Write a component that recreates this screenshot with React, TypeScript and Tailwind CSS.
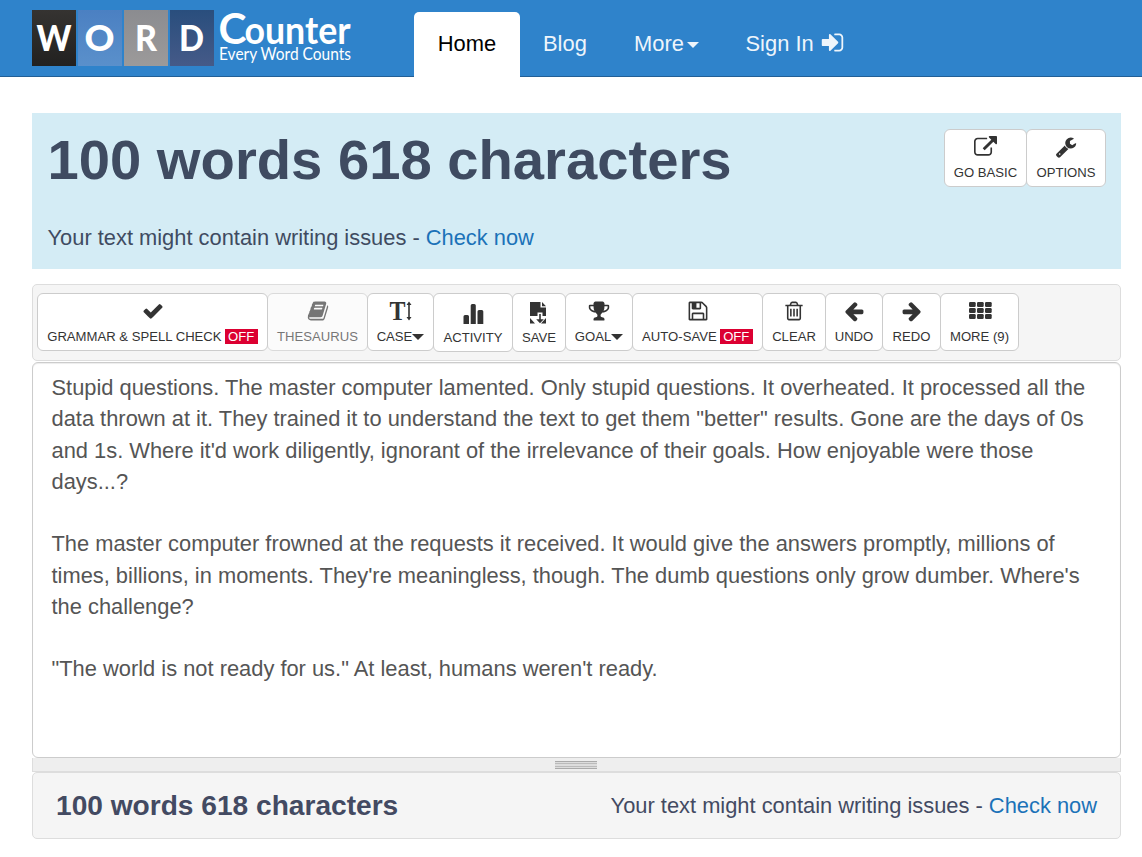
import type { ReactNode } from "react";
import clsx from "clsx";

// Font Awesome 4 shapes, drawn on their 1792 grid
const paths = {
  signIn:
    "M1312 896q0 26-19 45l-544 544q-19 19-45 19t-45-19-19-45v-288h-448q-26 0-45-19t-19-45v-384q0-26 19-45t45-19h448v-288q0-26 19-45t45-19 45 19l544 544q19 19 19 45zm352-352v704q0 119-84.5 203.5t-203.5 84.5h-320q-13 0-22.5-9.5t-9.5-22.5q0-4-1-20t-.5-26.5 3-23.5 10-19.5 20.5-6.5h320q66 0 113-47t47-113v-704q0-66-47-113t-113-47h-312l-11.5-1-11.5-3-8-5.5-7-9-2-13.5q0-4-1-20t-.5-26.5 3-23.5 10-19.5 20.5-6.5h320q119 0 203.5 84.5t84.5 203.5z",
  externalLink:
    "M1408 928v320q0 119-84.5 203.5t-203.5 84.5h-832q-119 0-203.5-84.5t-84.5-203.5v-832q0-119 84.5-203.5t203.5-84.5h704q14 0 23 9t9 23v64q0 14-9 23t-23 9h-704q-66 0-113 47t-47 113v832q0 66 47 113t113 47h832q66 0 113-47t47-113v-320q0-14 9-23t23-9h64q14 0 23 9t9 23zm384-864v512q0 26-19 45t-45 19-45-19l-176-176-652 652q-10 10-23 10t-23-10l-114-114q-10-10-10-23t10-23l652-652-176-176q-19-19-19-45t19-45 45-19h512q26 0 45 19t19 45z",
  wrench:
    "M448 1472q0-26-19-45t-45-19-45 19-19 45 19 45 45 19 45-19 19-45zm644-420l-682 682q-37 37-90 37-52 0-91-37l-106-108q-38-36-38-90 0-53 38-91l681-681q39 98 114.5 173.5t173.5 114.5zm634-435q0 39-23 106-47 134-164.5 217.5t-258.5 83.5q-185 0-316.5-131.5t-131.5-316.5 131.5-316.5 316.5-131.5q58 0 121.5 16.5t107.5 46.5q16 11 16 28t-16 28l-293 169v224l193 107q5-3 79-48.5t135.5-81 70.5-35.5q15 0 23.5 10t8.5 25z",
  check:
    "M1671 566q0 40-28 68l-724 724-136 136q-28 28-68 28t-68-28l-136-136-362-362q-28-28-28-68t28-68l136-136q28-28 68-28t68 28l294 295 656-657q28-28 68-28t68 28l136 136q28 28 28 68z",
  book:
    "M1703 478q40 57 18 129l-275 906q-19 64-76.5 107.5t-122.5 43.5h-923q-77 0-148.5-53.5t-99.5-131.5q-24-67-2-127 0-4 3-27t4-37q1-8-3-21.5t-3-19.5q2-11 8-21t16.5-23.5 16.5-23.5q23-38 45-91.5t30-91.5q3-10 .5-30t-.5-28q3-11 17-28t17-23q21-36 42-92t25-90q1-9-2.5-32t.5-28q4-13 22-30.5t22-22.5q19-26 42.5-84.5t27.5-96.5q1-8-3-25.5t-2-26.5q2-8 9-18t18-23 17-21q8-12 16.5-30.5t15-35 16-36 19.5-32 26.5-23.5 36-11.5 47.5 5.5l-1 3q38-9 51-9h761q74 0 114 56t18 130l-274 906q-36 119-71.5 153.5t-128.5 34.5h-869q-27 0-38 15-11 16-1 43 24 70 144 70h923q29 0 56-15.5t35-41.5l300-987q7-22 5-57 38 15 59 43zm-1064 2q-4 13 2 22.5t20 9.5h608q13 0 25.5-9.5t16.5-22.5l21-64q4-13-2-22.5t-20-9.5h-608q-13 0-25.5 9.5t-16.5 22.5zm-83 256q-4 13 2 22.5t20 9.5h608q13 0 25.5-9.5t16.5-22.5l21-64q4-13-2-22.5t-20-9.5h-608q-13 0-25.5 9.5t-16.5 22.5z",
  trophy:
    "M522 883q-74-162-74-371h-256v96q0 78 94.5 162t235.5 113zm1078-275v-96h-256q0 209-74 371 141-29 235.5-113t94.5-162zm128-128v128q0 71-41.5 143t-112 130-173 97.5-215.5 44.5q-42 54-95 95-38 34-52.5 72.5t-14.5 89.5q0 54 30.5 91t97.5 37q75 0 133.5 45.5t58.5 114.5v64q0 14-9 23t-23 9h-832q-14 0-23-9t-9-23v-64q0-69 58.5-114.5t133.5-45.5q67 0 97.5-37t30.5-91q0-51-14.5-89.5t-52.5-72.5q-53-41-95-95-113-5-215.5-44.5t-173-97.5-112-130-41.5-143v-128q0-40 28-68t68-28h288v-96q0-66 47-113t113-47h576q66 0 113 47t47 113v96h288q40 0 68 28t28 68z",
  floppy:
    "M512 1536h768v-384h-768v384zm896 0h128v-896q0-14-10-38.5t-20-34.5l-281-281q-10-10-34-20t-39-10v416q0 40-28 68t-68 28h-576q-40 0-68-28t-28-68v-416h-128v1280h128v-416q0-40 28-68t68-28h832q40 0 68 28t28 68v416zm-384-928v-320q0-13-9.5-22.5t-22.5-9.5h-192q-13 0-22.5 9.5t-9.5 22.5v320q0 13 9.5 22.5t22.5 9.5h192q13 0 22.5-9.5t9.5-22.5zm640 32v928q0 40-28 68t-68 28h-1344q-40 0-68-28t-28-68v-1344q0-40 28-68t68-28h928q40 0 88 20t76 48l280 280q28 28 48 76t20 88z",
  trash:
    "M704 736v576q0 14-9 23t-23 9h-64q-14 0-23-9t-9-23v-576q0-14 9-23t23-9h64q14 0 23 9t9 23zm256 0v576q0 14-9 23t-23 9h-64q-14 0-23-9t-9-23v-576q0-14 9-23t23-9h64q14 0 23 9t9 23zm256 0v576q0 14-9 23t-23 9h-64q-14 0-23-9t-9-23v-576q0-14 9-23t23-9h64q14 0 23 9t9 23zm128 724v-948h-896v948q0 22 7 40.5t14.5 27 10.5 8.5h832q3 0 10.5-8.5t14.5-27 7-40.5zm-672-1076h448l-48-117q-7-9-17-11h-317q-10 2-17 11zm928 32v64q0 14-9 23t-23 9h-96v948q0 83-47 143.5t-113 60.5h-832q-66 0-113-58.5t-47-141.5v-952h-96q-14 0-23-9t-9-23v-64q0-14 9-23t23-9h309l70-167q15-37 54-63t79-26h320q40 0 79 26t54 63l70 167h309q14 0 23 9t9 23z",
  arrowLeft:
    "M1664 896v128q0 53-32.5 90.5t-84.5 37.5h-704l293 294q38 36 38 90t-38 90l-75 76q-37 37-90 37-52 0-91-37l-651-652q-37-37-37-90 0-52 37-91l651-650q38-38 91-38 52 0 90 38l75 74q38 38 38 91t-38 91l-293 293h704q52 0 84.5 37.5t32.5 90.5z",
  arrowRight:
    "M1600 960q0 54-37 91l-651 651q-39 37-91 37-51 0-90-37l-75-75q-38-38-38-91t38-91l293-293h-704q-52 0-84.5-37.5t-32.5-90.5v-128q0-53 32.5-90.5t84.5-37.5h704l-293-294q-38-36-38-90t38-90l75-75q38-38 90-38 53 0 91 38l651 651q37 35 37 90z",
};

function Icon({ name, className = "size-[22px]" }: { name: keyof typeof paths; className?: string }) {
  return (
    <svg viewBox="0 0 1792 1792" fill="currentColor" className={className}>
      <path d={paths[name]} />
    </svg>
  );
}

function TextHeightIcon() {
  return (
    <svg viewBox="0 0 24 22" fill="currentColor" className="h-[22px] w-6 overflow-visible">
      <text
        x="0.500"
        y="20"
        fontSize="28"
        fontWeight="700"
        textLength="16"
        lengthAdjust="spacingAndGlyphs"
        fontFamily="Liberation Serif, serif"
      >
        T
      </text>
      <path d="M20 1.500l2.500 3.500h-1.700v12h1.700l-2.500 3.500-2.500-3.500h1.700V5h-1.700z" />
    </svg>
  );
}

function ChartIcon() {
  return (
    <svg viewBox="0 0 22 22" fill="currentColor" className="size-[22px] overflow-visible">
      <path d="M1.500 23v-7.500q0-1.500 1.500-1.500h2.500q1.500 0 1.500 1.500V23zM8.700 23V4.500Q8.700 3 10.200 3h2.100q1.500 0 1.500 1.500V23zM15.500 23V10.500Q15.500 9 17 9h2.800q1.500 0 1.500 1.500V23z" />
    </svg>
  );
}

function SaveFileIcon() {
  return (
    <svg viewBox="0 0 18 22" fill="currentColor" className="mt-0.5 h-[22px] w-[18px]">
      <path d="M0 0h10.500v5.500H16V14h-3.500v-3.500h-5V14H0zM12 0l4 4.200h-4zM0 16l5 5.500H0zM16 16v5.500h-5zM9.200 12h1.600v5.200h3L10 21.300l-3.800-4.100h3z" />
    </svg>
  );
}

function GridIcon() {
  return (
    <svg viewBox="0 0 24 22" fill="currentColor" className="h-[22px] w-6">
      {[2, 8, 14].map((y) =>
        [1, 9, 17].map((x) => <rect key={`${x}-${y}`} x={x} y={y} width="6.700" height="5" rx="1.200" />)
      )}
    </svg>
  );
}

function Caret({ className }: { className: string }) {
  return (
    <svg viewBox="0 0 12 6" fill="currentColor" preserveAspectRatio="none" className={className}>
      <path d="M0 0h12L6 6z" />
    </svg>
  );
}

function Off() {
  return <span className="ml-[3px] bg-[#dc0032] px-[3.500px] text-white">OFF</span>;
}

type ToolProps = { icon: ReactNode; children: ReactNode; className: string };

function Tool({ icon, children, className }: ToolProps) {
  return (
    <button
      className={clsx(
        "flex shrink-0 flex-col items-center rounded-[6px] border border-[#ccc] bg-white pt-[6px] text-[13.120px] leading-[15px] whitespace-nowrap text-[#333]",
        className
      )}
    >
      <span className="flex h-[22px] items-center">{icon}</span>
      <span className="mt-[7px] flex items-center">{children}</span>
    </button>
  );
}

function Logo() {
  const tiles = [
    { letter: "W", x: 0, width: 44, from: "#353331", to: "#222120", len: 35 },
    { letter: "O", x: 46, width: 44, from: "#4b80c2", to: "#5a90cb", len: 30 },
    { letter: "R", x: 92, width: 44, from: "#8b8c90", to: "#9c9a9a", len: 22 },
    { letter: "D", x: 138, width: 44, from: "#294e7d", to: "#455a88", len: 25 },
  ];

  return (
    <svg viewBox="0 0 322 60" className="h-[60px] w-[322px] overflow-visible" fill="#fff" fontFamily="Lato, sans-serif">
      {tiles.map((t) => (
        <g key={t.letter}>
          <linearGradient id={`tile-${t.letter}`} x1="0" y1="0" x2="0" y2="1">
            <stop stopColor={t.from} />
            <stop offset="1" stopColor={t.to} />
          </linearGradient>
          <rect x={t.x} width={t.width} height="56" fill={`url(#tile-${t.letter})`} />
          <text
            x={t.x + (t.letter === "W" || t.letter === "R" ? 22 : 21.500)}
            y="41"
            fontSize="36"
            fontWeight="900"
            textAnchor="middle"
            textLength={t.len}
            lengthAdjust="spacingAndGlyphs"
          >
            {t.letter}
          </text>
        </g>
      ))}
      <text x="186.500" y="34" fontSize="42" fontWeight="700" textLength="28" lengthAdjust="spacingAndGlyphs">
        C
      </text>
      <text x="212.500" y="34" fontSize="39" fontWeight="700" textLength="106" lengthAdjust="spacingAndGlyphs">
        ounter
      </text>
      <text x="187" y="50" fontSize="17.500" textLength="132" lengthAdjust="spacingAndGlyphs">
        Every Word Counts
      </text>
    </svg>
  );
}

function Header() {
  return (
    <header className="flex h-[77px] border-b border-[#225f96] bg-[#2f83cb] pl-8">
      <div className="w-[382px] pt-[10px]">
        <Logo />
      </div>
      <nav className="mt-3 flex h-[65px] text-[21.900px] leading-[64px] text-[#eef5fb]">
        <a className="h-[65px] w-[106px] rounded-t-[5px] bg-white text-center text-black">Home</a>
        <a className="w-[91px] pl-[23px]">Blog</a>
        <a className="flex h-[63px] w-[111px] items-center pl-[23px]">
          More
          <Caret className="mt-0.5 ml-[3px] h-[6px] w-[12px]" />
        </a>
        <a className="flex h-[63px] items-center pl-[23.500px]">
          Sign In
          <Icon name="signIn" className="mb-0.5 ml-1.5 size-[25px]" />
        </a>
      </nav>
    </header>
  );
}

const text = `Stupid questions. The master computer lamented. Only stupid questions. It overheated. It processed all the
data thrown at it. They trained it to understand the text to get them "better" results. Gone are the days of 0s
and 1s. Where it'd work diligently, ignorant of the irrelevance of their goals. How enjoyable were those
days...?

The master computer frowned at the requests it received. It would give the answers promptly, millions of
times, billions, in moments. They're meaningless, though. The dumb questions only grow dumber. Where's
the challenge?

"The world is not ready for us." At least, humans weren't ready.`;

export default function App() {
  return (
    <div className="h-[857px] w-[1142px] overflow-hidden bg-white font-['Liberation_Sans',Arial,sans-serif]">
      <Header />

      <main className="mt-9 ml-8 w-[1089px]">
        <section className="flex h-[156px] justify-between bg-[#d4ecf5] pr-[15px] pl-[15.500px] text-[#3f4b61]">
          <div>
            <h1 className="mt-[15px] text-[56.200px] leading-[64px] font-bold whitespace-nowrap">
              100 words 618 characters
            </h1>
            <p className="mt-[30px] text-[21.860px] leading-[31px]">
              Your text might contain writing issues - <a className="text-[#1b72b8]">Check now</a>
            </p>
          </div>
          <div className="mt-4 flex">
            <Tool className="h-[58px] w-[83px]" icon={<Icon name="externalLink" className="size-[23px]" />}>
              GO BASIC
            </Tool>
            <Tool className="-ml-px h-[58px] w-[80px]" icon={<Icon name="wrench" />}>
              OPTIONS
            </Tool>
          </div>
        </section>

        <div className="mt-[15px] flex h-[77px] items-start rounded-[5px] border border-[#ddd] bg-[#f5f5f5] pt-2 pl-1">
          <Tool className="h-[58px] w-[231px]" icon={<Icon name="check" />}>
            GRAMMAR &amp; SPELL CHECK
            <Off />
          </Tool>
          <Tool className="-ml-px h-[58px] w-[101px] opacity-65" icon={<Icon name="book" />}>
            THESAURUS
          </Tool>
          <Tool className="-ml-px h-[58px] w-[67px]" icon={<TextHeightIcon />}>
            CASE
            <Caret className="h-[6px] w-[12px]" />
          </Tool>
          <Tool className="-ml-px h-[59px] w-[80px] pt-[7px]" icon={<ChartIcon />}>
            ACTIVITY
          </Tool>
          <Tool className="-ml-px h-[59px] w-[54px] pt-[7px]" icon={<SaveFileIcon />}>
            SAVE
          </Tool>
          <Tool className="-ml-px h-[58px] w-[68px]" icon={<Icon name="trophy" />}>
            GOAL
            <Caret className="h-[6px] w-[12px]" />
          </Tool>
          <Tool className="-ml-px h-[58px] w-[131px]" icon={<Icon name="floppy" />}>
            AUTO-SAVE
            <Off />
          </Tool>
          <Tool className="-ml-px h-[58px] w-[64px]" icon={<Icon name="trash" />}>
            CLEAR
          </Tool>
          <Tool className="-ml-px h-[58px] w-[58px]" icon={<Icon name="arrowLeft" />}>
            UNDO
          </Tool>
          <Tool className="-ml-px h-[58px] w-[59px]" icon={<Icon name="arrowRight" />}>
            REDO
          </Tool>
          <Tool className="-ml-px h-[58px] w-[79px]" icon={<GridIcon />}>
            MORE (9)
          </Tool>
        </div>

        <div className="mt-px h-[396px] rounded-[6px] border border-[#ccc] pt-[9px] pl-[18.500px] text-[21.860px] leading-[31.250px] whitespace-pre text-[#555] shadow-[inset_0_1px_1px_rgba(0,0,0,0.075)]">
          {text}
        </div>
        <div className="flex h-[14px] justify-center border border-t-0 border-[#ddd] bg-[#eee] pt-[3px] pr-0.5">
          <div className="flex h-2 w-[42px] flex-col justify-between border-y border-[#aaa] bg-[#ddd] py-[1px]">
            <i className="h-px bg-[#bbb]" />
            <i className="h-px bg-[#bbb]" />
          </div>
        </div>

        <footer className="flex h-[67px] items-center justify-between rounded-[5px] border border-[#ddd] bg-[#f5f5f5] px-[23px] text-[#434a62]">
          <h2 className="text-[28.120px] leading-[40px] font-bold">100 words 618 characters</h2>
          <p className="mt-0.5 text-[21.860px]">
            Your text might contain writing issues - <a className="text-[#1b72b8]">Check now</a>
          </p>
        </footer>
      </main>
    </div>
  );
}
